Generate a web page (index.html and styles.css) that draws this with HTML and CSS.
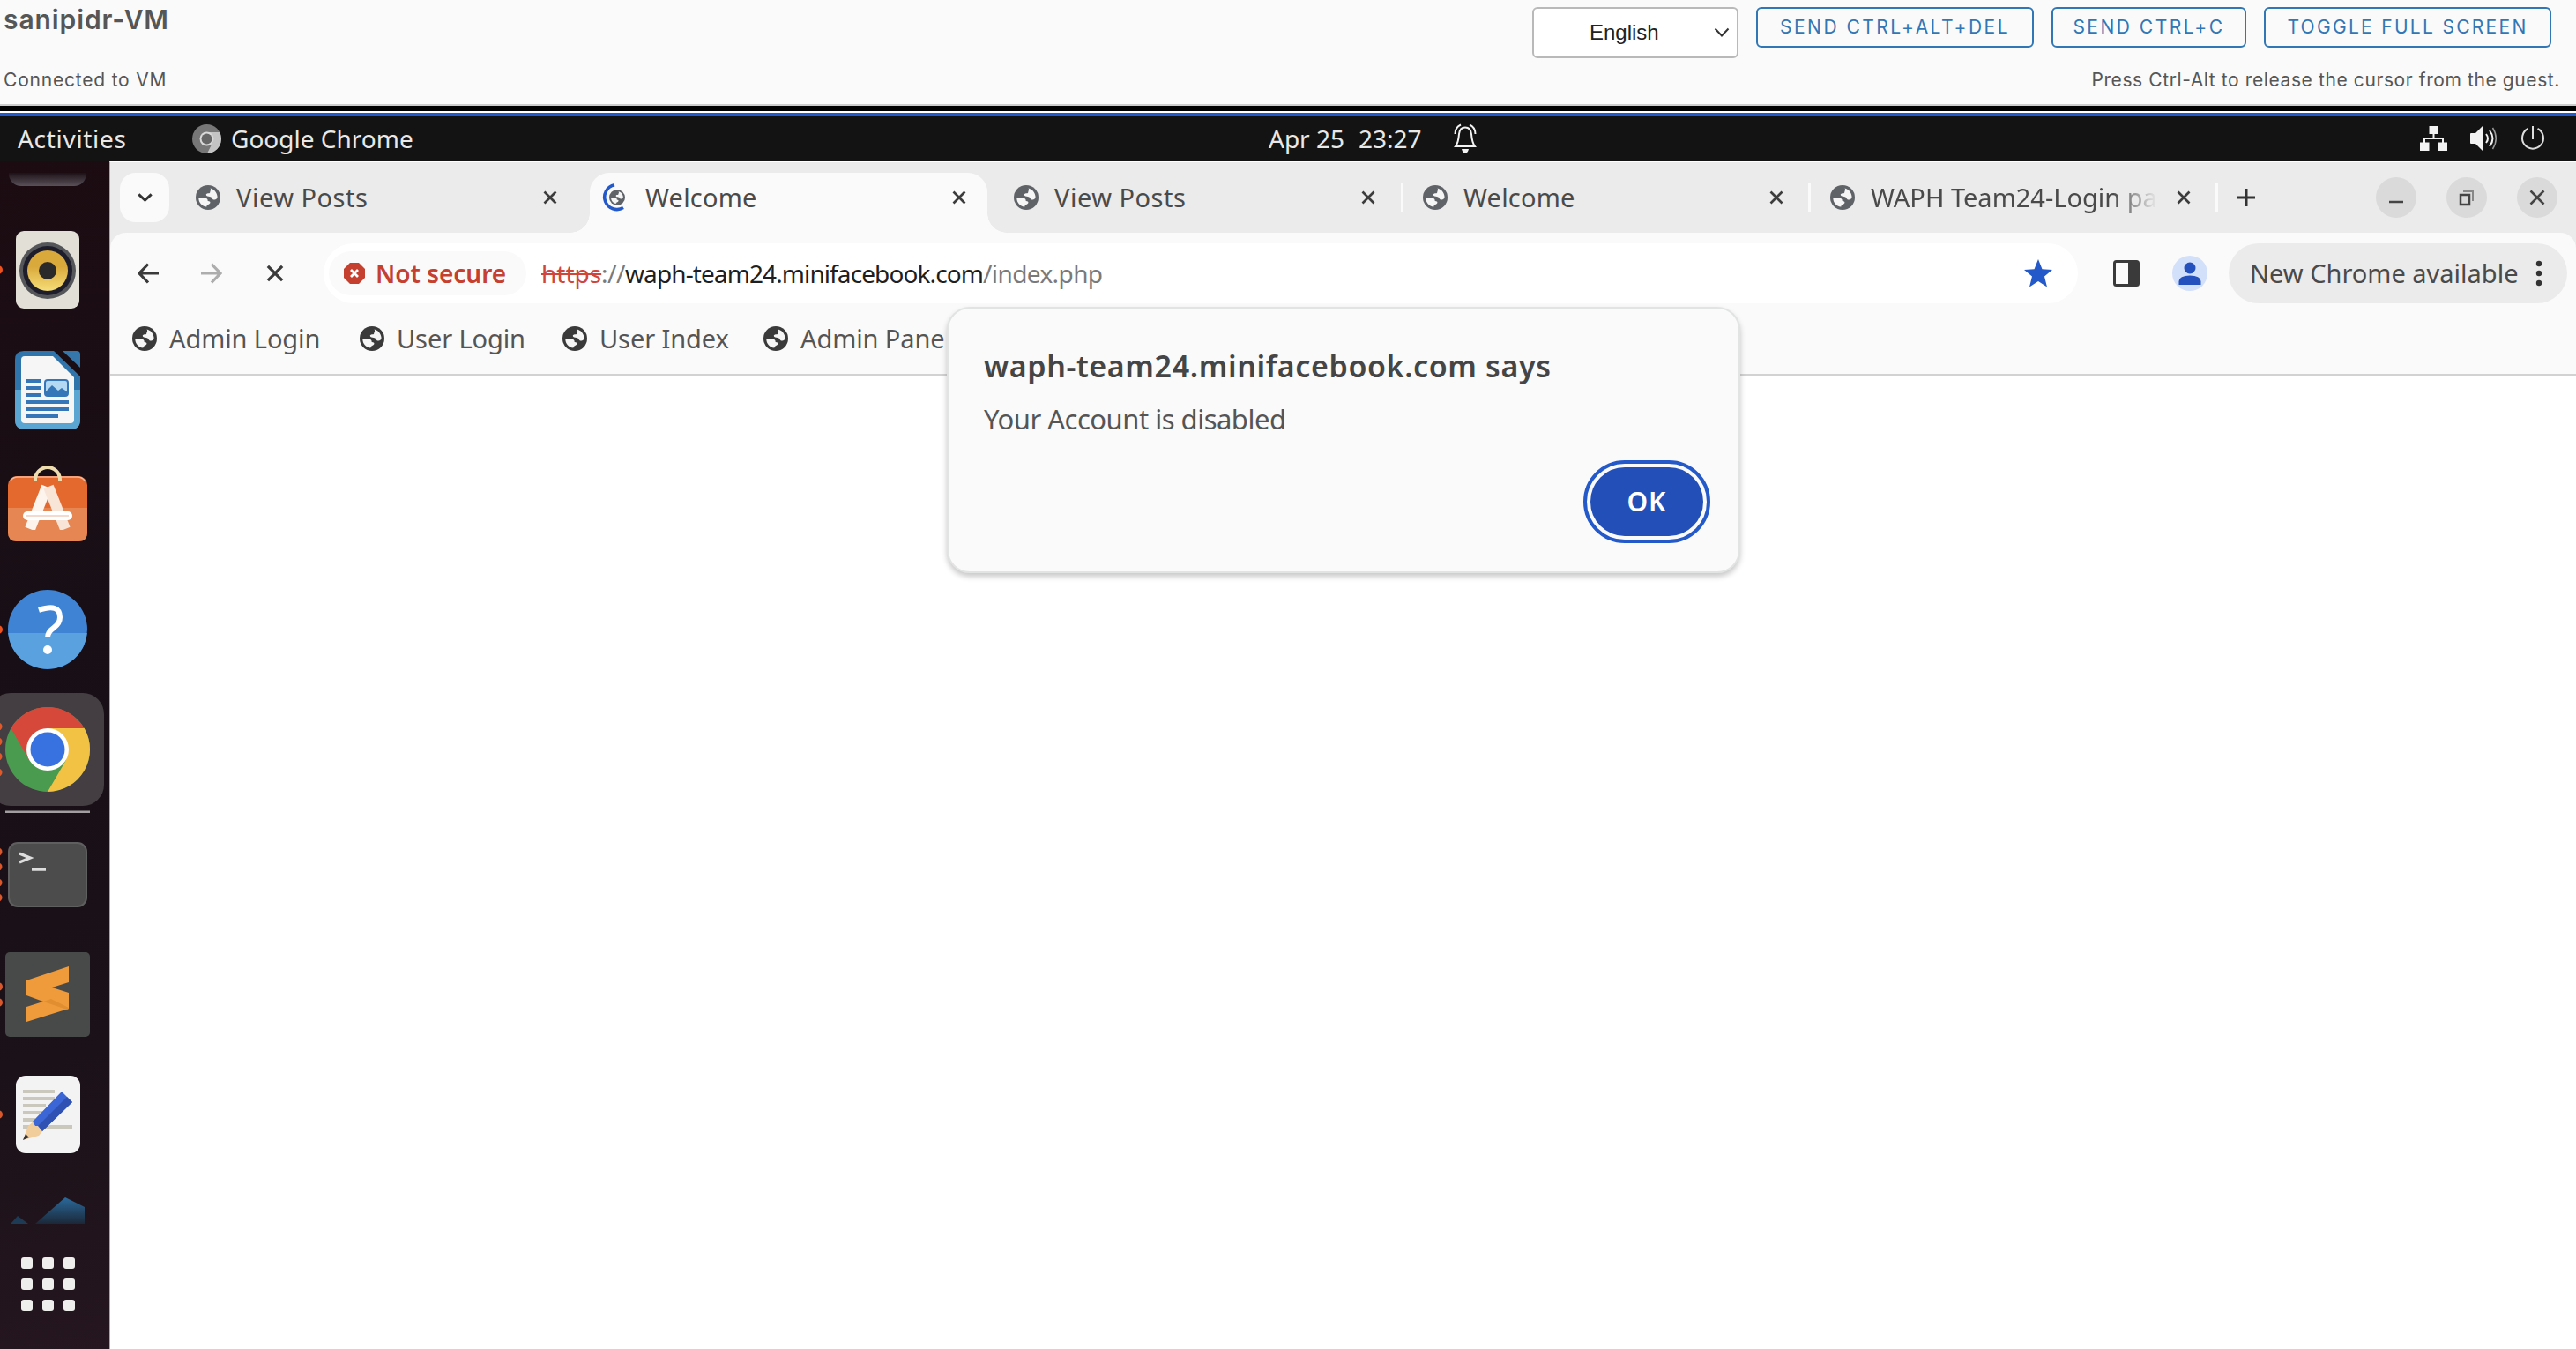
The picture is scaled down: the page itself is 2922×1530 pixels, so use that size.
FILE: index.html
```html
<!DOCTYPE html>
<html lang="en">
<head>
<meta charset="utf-8">
<title>sanipidr-VM</title>
<link rel="stylesheet" href="styles.css">
</head>
<body>
<svg width="0" height="0" class="defs">
  <symbol id="globe" viewBox="0 0 28 28">
    <circle cx="14" cy="14" r="14" fill="currentColor"/>
    <path class="land" d="M16.500 3.400C20.500 4.200 24.300 8 24.600 13.200C24.200 16.200 22 17 19.600 16.200C18.600 15.600 18.600 14.200 17.400 13.500C15.500 12.600 13.500 13.200 12.300 12C11 10.200 12.700 9.200 14.700 9.300C17 9.300 16 7 16.800 6.300C17.300 5.500 17.200 4.300 16.500 3.400Z"/>
    <path class="land" d="M3.300 14.200H9.500C12 14.200 13.800 15.400 13.700 18C16 18.200 17 19 16.200 20.500C15 22.500 12.800 21.500 12.300 24.600C7 24 3.300 19.800 3.300 14.200Z"/>
  </symbol>
  <symbol id="close" viewBox="0 0 16 16"><path d="M1.500 1.500L14.500 14.500M14.500 1.500L1.500 14.500" fill="none" stroke="currentColor" stroke-width="2.700"/></symbol>
</svg>

<header class="console">
  <div class="console-left">
    <h1>sanipidr-VM</h1>
    <p>Connected to VM</p>
  </div>
  <div class="console-right">
    <div class="actions">
      <div class="select">English<svg width="18" height="12" viewBox="0 0 18 12"><path d="M1.500 1.500L9 9.500L16.500 1.500" fill="none" stroke="#333" stroke-width="2"/></svg></div>
      <button class="btn b1">SEND CTRL+ALT+DEL</button>
      <button class="btn b2">SEND CTRL+C</button>
      <button class="btn b3">TOGGLE FULL SCREEN</button>
    </div>
    <p>Press Ctrl-Alt to release the cursor from the guest.</p>
  </div>
</header>

<div class="vm">
  <div class="topbar">
    <span class="activities">Activities</span>
    <svg class="chrome-mono" width="33" height="33" viewBox="0 0 33 33"><circle cx="16.500" cy="16.500" r="16.500" fill="#777"/><path d="M16.500 9H31.200A16.500 16.500 0 0 1 17 33L23.500 20Z" fill="#c4c4c4"/><circle cx="16.500" cy="16.500" r="8" fill="#d8d8d8"/><circle cx="16.500" cy="16.500" r="6" fill="#666"/></svg>
    <span class="app">Google Chrome</span>
    <span class="date">Apr 25</span><span class="time">23:27</span>
    <svg class="bell" width="26" height="34" viewBox="0 0 26 34"><g fill="none" stroke="#f2f2f2" stroke-width="2"><path d="M2 26H24C21 22 20.500 19 20 12C19.500 7 17 4.500 13 4.500S6.500 7 6 12C5.500 19 5 22 2 26Z"/><path d="M1.500 12C1.500 7 3.500 3.500 8 1.500M24.500 12C24.500 7 22.500 3.500 18 1.500"/></g><path d="M9 29H17Q16 33.500 13 33.500T9 29Z" fill="#f2f2f2"/></svg>
    <div class="tray">
      <svg width="31" height="28" viewBox="0 0 31 28"><path d="M10.500 0H20.500V9H10.500ZM0 18.500H10.500V28H0ZM20.500 18.500H31V28H20.500Z" fill="#f2f2f2"/><path d="M15.500 8V14M5 19V14H26V19" fill="none" stroke="#f2f2f2" stroke-width="2"/></svg>
      <svg width="31" height="28" viewBox="0 0 31 28"><path d="M0 9Q0 8 1 8H6L14 0V28L6 20H1Q0 20 0 19Z" fill="#f2f2f2"/><path d="M18 9Q22 14 18 19M22 5Q29 14 22 23" fill="none" stroke="#f2f2f2" stroke-width="2"/><path d="M25.500 2Q33 14 25.500 26" fill="none" stroke="#999" stroke-width="1.500"/></svg>
      <svg width="28" height="28" viewBox="0 0 28 28"><path d="M14 0V15M8.500 3A12 12 0 1 0 19.500 3" fill="none" stroke="#ddd" stroke-width="2"/></svg>
    </div>
  </div>

  <div class="desktop">
    <aside class="dock">
      <div class="peek"></div>
      <svg class="speaker" width="124" height="90" viewBox="0 0 124 90"><defs><linearGradient id="gy" x2="0" y2="1"><stop stop-color="#d9a93c" offset=".4"/><stop stop-color="#f6de78" offset="1"/></linearGradient></defs><circle cx="-2" cy="45" r="5" fill="#e95420"/><rect x="18" y="1" width="72" height="88" rx="9" fill="#e2dfd6"/><circle cx="54" cy="46" r="32" fill="#55565a"/><circle cx="54" cy="46" r="28" fill="#1d1d2b"/><circle cx="54" cy="46" r="23" fill="url(#gy)"/><circle cx="54" cy="46" r="10" fill="#2a2a2a"/></svg>
      <svg class="writer" width="124" height="90" viewBox="0 0 124 90"><path d="M27 1H61L91 30V79Q91 90 80 90H28Q17 90 17 79V11Q17 1 27 1Z" fill="#2f74ab"/><path d="M17 45H91V79Q91 90 80 90H28Q17 90 17 79Z" fill="#5ba5d3"/><path d="M71 1H87Q91 1 91 5V20Z" fill="#3577aa"/><path d="M28 7H60L84 31V79Q84 83 80 83H28Q24 83 24 79V11Q24 7 28 7Z" fill="#f6f6f7"/><path d="M30 35H46M30 43H46M30 51H46M30 59H78M30 67H78M30 75H66" stroke="#3576b8" stroke-width="4"/><rect x="51" y="34" width="26" height="18" rx="3" fill="#b4daf3" stroke="#3576b8" stroke-width="2"/><path d="M52 51V47L59 40L66 46L70 43L77 48V51Z" fill="#3576b8"/></svg>
      <svg class="software" width="124" height="86" viewBox="0 0 124 86"><rect x="9" y="12" width="90" height="74" rx="10" fill="#e4692f"/><path d="M9 48H99V76Q99 86 89 86H19Q9 86 9 76Z" fill="#e68652"/><path d="M12 17Q15 13 20 13H88Q93 13 96 17" fill="none" stroke="#f6b798" stroke-width="1.500"/><path d="M40 17V16A14 14 0 0 1 68 16V17" fill="none" stroke="#efdcae" stroke-width="4"/><path d="M34 72L53 24" stroke="#fdf4ee" stroke-width="12"/><path d="M74 72L55 24" stroke="#f9e4d8" stroke-width="12"/><rect x="20" y="73" width="70" height="8" fill="#e68652"/><rect x="26" y="52" width="56" height="10" rx="5" fill="#fff"/><path d="M30 57H78" stroke="#f3cdbd" stroke-width="1.500"/></svg>
      <svg class="help" width="124" height="90" viewBox="0 0 124 90"><circle cx="-2" cy="45" r="5" fill="#e95420"/><circle cx="54" cy="45" r="45" fill="#3f84d4"/><path d="M9.200 49H98.800A45 45 0 0 1 9.200 49Z" fill="#5aa2df"/><path d="M44 23Q68 15 68 31Q68 38 61 43Q54 48 54 54" fill="none" stroke="#fff" stroke-width="6"/><circle cx="54" cy="68" r="5" fill="#fff"/></svg>
      <svg class="chrome" width="124" height="138" viewBox="0 0 124 138"><rect x="-12" y="2" width="130" height="128" rx="24" fill="#443d42"/><g fill="#e0592a"><circle cx="-2" cy="40" r="4.500"/><circle cx="-2" cy="57" r="4.500"/><circle cx="-2" cy="74" r="4.500"/><circle cx="-2" cy="92" r="4.500"/></g><circle cx="54" cy="66" r="48" fill="#4a9b50"/><path d="M54 42H95.600A48 48 0 0 1 54 114L75 78Z" fill="#f2c244"/><path d="M12.400 42A48 48 0 0 1 95.600 42H54L33 78Z" fill="#d6483a"/><circle cx="54" cy="66" r="24" fill="#fff"/><circle cx="54" cy="66" r="19.500" fill="#3871e0"/><rect x="6" y="135.500" width="96" height="2.500" fill="#a39da2"/></svg>
      <svg class="terminal" width="124" height="74" viewBox="0 0 124 74"><g fill="#d9572a"><circle cx="-2" cy="11" r="4.500"/><circle cx="-2" cy="28" r="4.500"/><circle cx="-2" cy="46" r="4.500"/><circle cx="-2" cy="63" r="4.500"/></g><rect x="10" y="1" width="88" height="72" rx="10" fill="#4c4c4c" stroke="#5f5f5f" stroke-width="2"/><path d="M22 13L34 18L22 23" fill="none" stroke="#ddd" stroke-width="3.500"/><path d="M36 31H52" stroke="#ddd" stroke-width="3.500"/></svg>
      <svg class="sublime" width="124" height="96" viewBox="0 0 124 96"><circle cx="-2" cy="39" r="5" fill="#d9572a"/><circle cx="-2" cy="57" r="5" fill="#d9572a"/><rect x="6" y="0" width="96" height="96" rx="5" fill="#484a4a"/><path d="M30 32L78 16V34L59 40L78 46V64L30 79V62L49 56L30 49Z" fill="#ef9b3c"/><path d="M49 56L58 53L78 63V64L76 65Z" fill="#e18e31"/></svg>
      <svg class="editor" width="124" height="90" viewBox="0 0 124 90"><circle cx="-2" cy="45" r="5" fill="#d9572a"/><rect x="18" y="1" width="73" height="88" rx="11" fill="#f3f3f3"/><path d="M26 19H62M26 27H62M26 35H52M26 43H48M26 51H40M26 59H82" stroke="#cac8bc" stroke-width="4"/><path d="M26 74L32 58L38 53L50 62L44 69Z" fill="#f1cd9b"/><path d="M26 74L29 67L33 71Z" fill="#333"/><path d="M37 53L70 19L82 31L48 64L44 58L40 58Z" fill="#3c66d6"/><path d="M43 58L76 25L82 31L48 64Z" fill="#2f51b4"/></svg>
      <svg class="code" width="124" height="32" viewBox="0 0 124 32"><defs><linearGradient id="gb" x2="0" y2="1"><stop stop-color="#2a6a9c"/><stop stop-color="#1b2838" offset="1"/></linearGradient></defs><path d="M40 31L74 1L96 12V31Z" fill="url(#gb)"/><path d="M12 31L20 22L32 31Z" fill="#1d3b55"/></svg>
      <div class="apps"><i></i><i></i><i></i><i></i><i></i><i></i><i></i><i></i><i></i></div>
    </aside>

    <main class="browser">
      <div class="tabs">
        <div class="chevron"><svg width="17" height="10" viewBox="0 0 17 10"><path d="M1.300 1.300L8.500 8L15.700 1.300" fill="none" stroke="#333" stroke-width="3"/></svg></div>
        <div class="tab t1"><svg class="globe"><use href="#globe"/></svg><span>View Posts</span><svg class="x"><use href="#close"/></svg></div>
        <div class="tab active"><svg class="spinner" width="32" height="32" viewBox="0 0 32 32"><path d="M14 1.800A14 14 0 1 0 24 27.500" fill="none" stroke="#2459c9" stroke-width="3.600"/><svg x="8" y="7" width="18" height="18"><use href="#globe"/></svg></svg><span class="welcome">Welcome</span><svg class="x"><use href="#close"/></svg></div>
        <div class="tab t3"><svg class="globe"><use href="#globe"/></svg><span>View Posts</span><svg class="x"><use href="#close"/></svg></div>
        <div class="tab t4"><svg class="globe"><use href="#globe"/></svg><span class="welcome">Welcome</span><svg class="x"><use href="#close"/></svg></div>
        <div class="tab t4"><svg class="globe"><use href="#globe"/></svg><span class="fade">WAPH Team24-Login pa</span><svg class="x"><use href="#close"/></svg></div>
        <svg class="plus" width="20" height="20" viewBox="0 0 20 20"><path d="M10 0V20M0 10H20" stroke="#333" stroke-width="3"/></svg>
        <div class="winbtns">
          <b><svg width="46" height="46"><path d="M15 28H31" stroke="#444" stroke-width="2.500"/></svg></b>
          <b><svg width="46" height="46"><path d="M16 20H26V31H16Z" fill="none" stroke="#444" stroke-width="2.500"/><path d="M19 16H30V27" fill="none" stroke="#888" stroke-width="2"/></svg></b>
          <b><svg width="46" height="46"><path d="M15.500 15.500L30.500 30.500M30.500 15.500L15.500 30.500" stroke="#444" stroke-width="2.500"/></svg></b>
        </div>
      </div>

      <div class="toolbar">
        <svg class="back" width="24" height="24" viewBox="0 0 24 24"><path d="M12 1.500L2 12L12 22.500M2 12H24" fill="none" stroke="#3a3a3a" stroke-width="3.200"/></svg>
        <svg class="fwd" width="24" height="24" viewBox="0 0 24 24"><path d="M12 1.500L22 12L12 22.500M22 12H0" fill="none" stroke="#adadad" stroke-width="3.200"/></svg>
        <svg class="stop" width="20" height="20"><use href="#close"/></svg>
        <div class="omnibox">
          <div class="chip"><svg width="24" height="24" viewBox="0 0 24 24"><path d="M7 0H17L24 7V17L17 24H7L0 17V7Z" fill="#c5402f"/><path d="M8 8L16 16M16 8L8 16" stroke="#fff" stroke-width="2.800"/></svg><span>Not secure</span></div>
          <div class="url"><s>https</s><span class="sep">://</span><span class="host">waph-team24.minifacebook.com</span><span class="path">/index.php</span></div>
          <svg class="star" width="32" height="32" viewBox="0 0 32 32"><path d="M16 0L20.500 11.200L32 12L23 19.500L26 31.500L16 25L6 31.500L9 19.500L0 12L11.500 11.200Z" fill="#2459c9"/></svg>
        </div>
        <svg class="panel" width="30" height="30" viewBox="0 0 30 30"><rect x="1.500" y="1.500" width="27" height="27" rx="2" fill="#fafafa" stroke="#3a3a3a" stroke-width="3"/><path d="M17 2H28V28H17Z" fill="#3a3a3a"/></svg>
        <svg class="avatar" width="40" height="40" viewBox="0 0 40 40"><circle cx="20" cy="20" r="20" fill="#d3e0fa"/><circle cx="20" cy="14" r="6.500" fill="#2350bd"/><path d="M7.500 33V29Q8 22.500 20 22.500T32.500 29V33Z" fill="#2350bd"/></svg>
        <div class="update"><span>New Chrome available</span><svg width="8" height="30"><g fill="#333"><circle cx="4" cy="4" r="3.200"/><circle cx="4" cy="15" r="3.200"/><circle cx="4" cy="26" r="3.200"/></g></svg></div>
      </div>

      <div class="bookmarks">
        <a class="m1"><svg class="globe"><use href="#globe"/></svg>Admin Login</a>
        <a class="m2"><svg class="globe"><use href="#globe"/></svg>User Login</a>
        <a class="m3"><svg class="globe"><use href="#globe"/></svg>User Index</a>
        <a class="m4"><svg class="globe"><use href="#globe"/></svg>Admin Pane</a>
      </div>
      <div class="page"></div>

      <div class="dialog">
        <h2>waph-team24.minifacebook.com says</h2>
        <p>Your Account is disabled</p>
        <button>OK</button>
      </div>
    </main>
  </div>
</div>
</body>
</html>
```
FILE: styles.css
```css
* { box-sizing: border-box; }
body { margin: 0; width: 2922px; height: 1530px; overflow: hidden; display: flex; flex-direction: column; background: #fff; font-family: "Noto Sans", sans-serif; }
svg { display: block; flex: none; }
h1, h2, p { margin: 0; font-weight: 400; }
button { padding: 0; border: 0; font-family: inherit; }
.defs { position: absolute; }

.console { flex: none; height: 120px; background: #fafafa; border-bottom: 2px solid #ccc; display: flex; justify-content: space-between; color: #565656; font: 21px/30px Inter, sans-serif; letter-spacing: .6px; }
.console-left { padding: 4px 0 0 4px; }
.console-left h1 { font-size: 30px; line-height: 36px; font-weight: 600; letter-spacing: .9px; }
.console-left p { margin-top: 36px; letter-spacing: .8px; }
.console-right { padding-top: 8px; display: flex; flex-direction: column; }
.actions { display: flex; height: 58px; align-items: flex-start; margin-right: 28px; }
.select { width: 234px; height: 58px; border: 2px solid #b9b9b9; border-radius: 6px; background: #fff; color: #222; font: 24px/52px "Liberation Sans", sans-serif; letter-spacing: 0; padding: 0 8px 0 63px; display: flex; align-items: center; justify-content: space-between; margin-right: 20px; }
.btn { height: 46px; border: 2px solid #3277b5; border-radius: 6px; background: none; color: #3277b5; font-size: 21px; line-height: 42px; letter-spacing: 2.500px; white-space: nowrap; }
.b1 { width: 315px; margin-right: 20px; }
.b2 { width: 221px; margin-right: 20px; }
.b3 { width: 326px; letter-spacing: 2.300px; }
.console-right p { align-self: flex-end; margin: 10px 18px 0 0; }

.vm { flex: 1; display: flex; flex-direction: column; border-top: 6px solid #000; min-height: 0; }
.topbar { flex: none; height: 55px; margin-top: 2px; border-top: 4px solid #2459c9; background: #131313; color: #e8e8e8; display: flex; align-items: center; font-size: 28px; line-height: 40px; padding-bottom: 1px; }
.activities { width: 218px; padding-left: 20px; letter-spacing: .7px; }
.chrome-mono { margin-right: 11px; }
.app { width: 1177px; }
.date { width: 102px; }
.time { width: 108px; }
.tray { margin-left: auto; display: flex; gap: 26px; padding-right: 35px; }

.desktop { flex: 1; display: flex; min-height: 0; }
.dock { flex: none; width: 124px; background: linear-gradient(165deg, #1c0c12, #180f16 40%, #1b1118 75%, #25161f); display: flex; flex-direction: column; }
.peek { height: 15px; width: 88px; margin: 13px 0 50px 10px; border-radius: 0 0 14px 14px; background: linear-gradient(#1c1117, #5a5158); }
.writer { margin-top: 46px; }
.software { margin-top: 41px; }
.help { margin-top: 55px; }
.chrome { margin-top: 25px; }
.terminal { margin-top: 33px; }
.sublime { margin-top: 51px; }
.editor { margin-top: 43px; }
.code { margin-top: 48px; }
.apps { display: grid; grid-template-columns: repeat(3, 13px); gap: 11px; margin: 37px 0 0 23.500px; }
.apps i { height: 13px; border-radius: 3px; background: #eeeeec; }

.browser { flex: 1; min-width: 0; position: relative; display: flex; flex-direction: column; border-left: 1px solid #a9a5a7; border-top: 1px solid #fff; background: #ebebeb; }
.tabs { flex: none; height: 80px; display: flex; align-items: center; color: #4a4a4a; font-size: 29px; line-height: 40px; }
.chevron { width: 56px; height: 56px; margin: 0 7px 0 11px; border-radius: 18px; background: #fafafa; display: flex; align-items: center; justify-content: center; }
.tab { height: 32px; display: flex; align-items: center; position: relative; white-space: nowrap; }
.tab span { letter-spacing: .5px; }
.tab .welcome { letter-spacing: .2px; }
.globe { width: 28px; height: 28px; margin-right: 18px; color: #5f6368; }
.land { fill: #f5f5f5; }
.x { width: 16px; height: 16px; color: #3c3c3c; margin-left: auto; }
.t1 { width: 470px; padding: 0 37px 0 23px; }
.active { width: 451px; height: 68px; margin-top: 12px; padding: 0 24px 12px 14px; border-radius: 22px 22px 0 0; background: #fafafa; }
.active::before, .active::after { content: ""; position: absolute; bottom: 0; width: 22px; height: 22px; }
.active::before { left: -22px; background: radial-gradient(circle at 0 0, transparent 21.500px, #fafafa 22px); }
.active::after { right: -22px; background: radial-gradient(circle at 100% 0, transparent 21.500px, #fafafa 22px); }
.spinner { margin-right: 17px; color: #5f6368; }
.t3 { width: 472px; padding: 0 29px 0 30px; border-right: 3px solid #fafafa; }
.t4 { width: 462px; padding: 0 28px 0 22px; border-right: 3px solid #fafafa; }
.tab .fade { letter-spacing: 0; -webkit-mask-image: linear-gradient(90deg, #000 275px, transparent 325px); mask-image: linear-gradient(90deg, #000 275px, transparent 325px); }
.plus { margin-left: 22px; }
.winbtns { margin-left: auto; padding-right: 21px; display: flex; gap: 34px; }
.winbtns b { width: 46px; height: 46px; border-radius: 50%; background: #dadada; }

.toolbar { flex: none; height: 92px; padding: 0 10px 0 31px; background: #fafafa; border-radius: 18px 18px 0 0; display: flex; align-items: center; }
.fwd { margin-left: 48px; }
.stop { margin: 0 45px 0 50px; color: #3a3a3a; }
.omnibox { width: 1990px; height: 68px; border-radius: 34px; background: #fff; display: flex; align-items: center; padding: 0 29px 0 6px; font-size: 29px; line-height: 40px; }
.chip { width: 224px; height: 50px; border-radius: 25px; background: #fafafa; color: #c5402f; font-size: 28px; font-weight: 600; display: flex; align-items: center; gap: 12px; padding-left: 17px; margin-right: 17px; white-space: nowrap; }
.url { display: flex; font-size: 28px; color: #7a7a7a; }
.url s { color: #d0463b; width: 68px; }
.sep { width: 27px; letter-spacing: -.5px; }
.host { width: 406px; color: #1f1f1f; letter-spacing: -.9px; white-space: nowrap; }
.path { letter-spacing: -.6px; }
.star { margin-left: auto; }
.panel { margin-left: 40px; }
.avatar { margin-left: 37px; }
.update { width: 384px; height: 68px; margin-left: auto; border-radius: 34px; background: #ebebeb; color: #4a4a4a; font-size: 29px; line-height: 40px; display: flex; align-items: center; justify-content: space-between; padding: 0 28px 0 24px; white-space: nowrap; }

.bookmarks { flex: none; height: 70px; background: #fafafa; border-bottom: 2px solid #d2d2d2; padding: 0 0 13px 25px; display: flex; align-items: center; font-size: 29px; line-height: 40px; color: #555; white-space: nowrap; }
.bookmarks a { display: flex; align-items: center; letter-spacing: -.1px; }
.bookmarks .globe { color: #3a3a3a; margin-right: 14px; }
.m1 { width: 258px; }
.m2 { width: 230px; }
.m3 { width: 228px; }
.page { flex: 1; background: #fff; }

.dialog { position: absolute; left: 949px; top: 164px; width: 900px; height: 302px; padding: 41px 36px 0 40px; border: 2px solid #e2e3e3; border-radius: 26px; background: #fafafa; box-shadow: 0 4px 6px rgba(0,0,0,.22); display: flex; flex-direction: column; color: #454545; }
.dialog h2 { font-size: 34px; line-height: 48px; font-weight: 600; letter-spacing: .6px; white-space: nowrap; }
.dialog p { font-size: 31px; line-height: 42px; margin-top: 15px; letter-spacing: -.5px; color: #555; }
.dialog button { align-self: flex-end; width: 136px; height: 86px; margin-top: 30px; border-radius: 43px; border: 4px solid #fafafa; outline: 4px solid #2459c9; background: #2350b8; color: #fff; font-size: 30px; line-height: 40px; font-weight: 600; letter-spacing: 1px; }
```
